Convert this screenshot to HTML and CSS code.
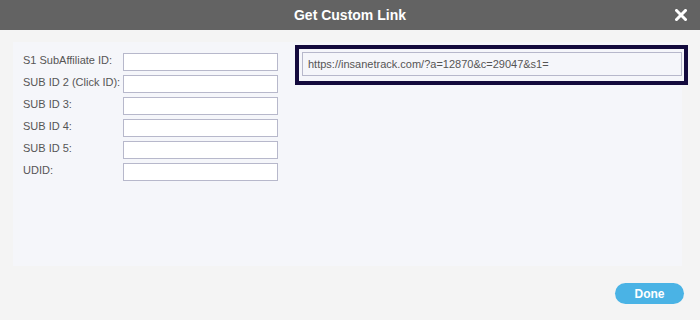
FILE: index.html
```html
<!DOCTYPE html>
<html>
	<head>
		<meta charset="utf-8">
		<title>Get Custom Link</title>
		<link rel="stylesheet" href="styles.css">
	</head>
	<body>
		<div class="dialog">
			<div class="dialog-head">
				<h2>Get Custom Link</h2>
				<a href="javascript:;" class="close">
					<svg width="12" height="12" viewBox="0 0 12 12">
						<path d="M1.5 1.5 L10.5 10.5 M10.5 1.5 L1.5 10.5" stroke="#fff" stroke-width="3" stroke-linecap="square"/>
					</svg>
				</a>
			</div>
			<div class="dialog-body">
				<div class="panel">
					<div class="fields">
						<label class="row"><span>S1 SubAffiliate ID:</span><input type="text"></label>
						<label class="row"><span>SUB ID 2 (Click ID):</span><input type="text"></label>
						<label class="row"><span>SUB ID 3:</span><input type="text"></label>
						<label class="row"><span>SUB ID 4:</span><input type="text"></label>
						<label class="row"><span>SUB ID 5:</span><input type="text"></label>
						<label class="row"><span>UDID:</span><input type="text"></label>
					</div>
					<div class="link-box">
						<input type="text" class="link" value="https://insanetrack.com/?a=12870&amp;c=29047&amp;s1=" readonly>
					</div>
				</div>
				<div class="actions">
					<button type="button" class="btn-done">Done</button>
				</div>
			</div>
		</div>
	</body>
</html>
```

FILE: styles.css
```css
* {
	box-sizing: border-box;
}
body {
	margin: 0;
	background: #f4f4f4;
	font-family: "Liberation Sans", Arial, sans-serif;
}
.dialog {
	width: 700px;
	height: 320px;
}
.dialog-head {
	height: 30px;
	background: #636363;
	display: flex;
	align-items: center;
	justify-content: center;
	position: relative;
}
.dialog-head h2 {
	margin: 0;
	font-size: 14px;
	font-weight: bold;
	color: #fff;
}
.close {
	position: absolute;
	right: 13px;
	top: 9px;
	display: block;
	width: 12px;
	height: 12px;
}
.close svg {
	display: block;
}
.dialog-body {
	padding: 12px 0 0 13px;
}
.panel {
	width: 669px;
	height: 224px;
	background: #f5f6fa;
	display: flex;
	align-items: flex-start;
	padding: 3px 0 0 10px;
}
.fields {
	display: flex;
	flex-direction: column;
	gap: 4px;
	padding-top: 8px;
}
.row {
	display: flex;
	align-items: flex-start;
}
.row span {
	width: 100px;
	font-size: 11px;
	line-height: 13px;
	padding-top: 1px;
	color: #555;
}
.row input {
	width: 155px;
	height: 18px;
	margin: 0;
	border: 1px solid #b7b8cb;
	background: #fff;
	outline: none;
}
.link-box {
	margin-left: 17px;
	width: 393px;
	height: 40px;
	border: 4px solid #130a3d;
	background: #f5f6fa;
	padding: 3px 2px 0 3px;
}
.link {
	display: block;
	width: 380px;
	height: 24px;
	margin: 0;
	padding: 0 5px;
	border: 1px solid #b7b8cb;
	background: #f5f6fa;
	font: 11px "Liberation Sans", Arial, sans-serif;
	color: #555;
	outline: none;
}
.actions {
	display: flex;
	justify-content: flex-end;
	padding: 17px 16px 0 0;
}
.btn-done {
	width: 69px;
	height: 21px;
	border: none;
	border-radius: 11px;
	background: #4ab3e5;
	color: #fff;
	font: bold 12px "Liberation Sans", Arial, sans-serif;
	padding: 0;
}
```
